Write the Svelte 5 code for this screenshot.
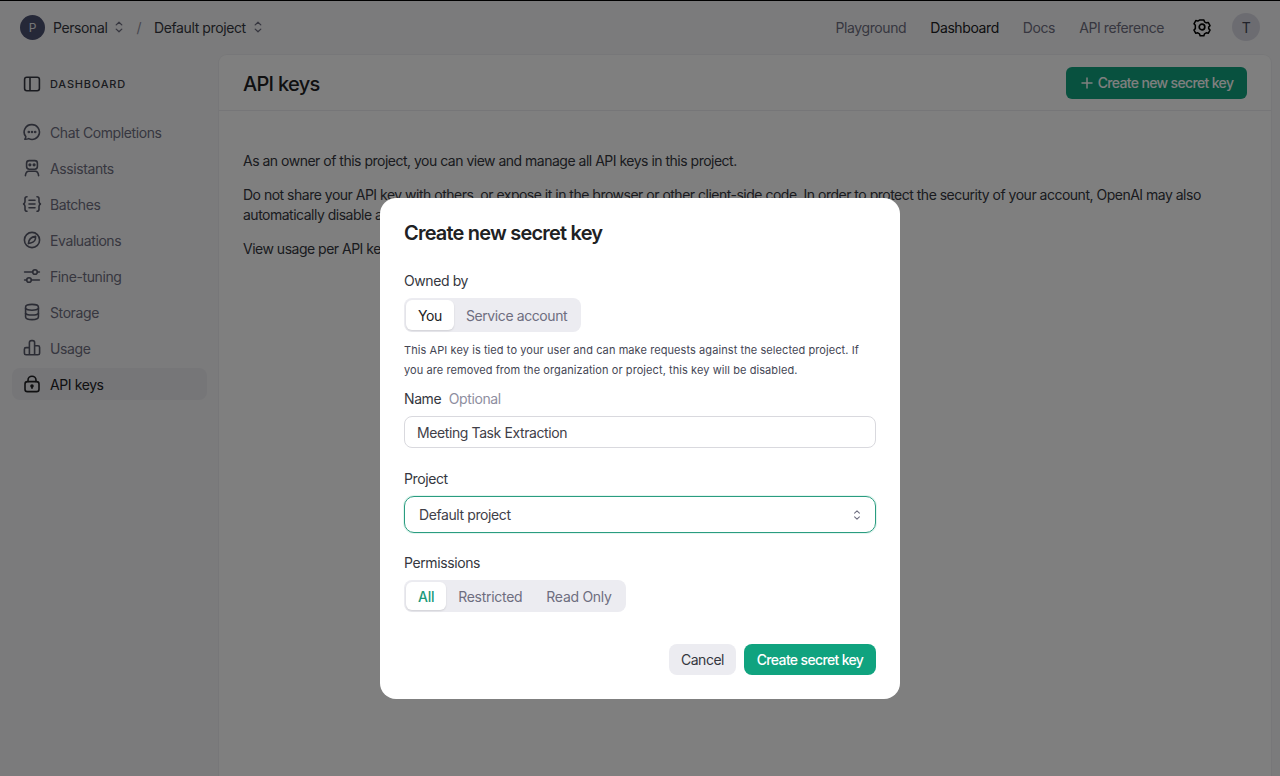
<script>
  const navItems = [
    { label: 'Chat Completions', icon: 'chat' },
    { label: 'Assistants', icon: 'bot' },
    { label: 'Batches', icon: 'batch' },
    { label: 'Evaluations', icon: 'compass' },
    { label: 'Fine-tuning', icon: 'tune' },
    { label: 'Storage', icon: 'db' },
    { label: 'Usage', icon: 'bars' },
    { label: 'API keys', icon: 'lock', active: true }
  ]
</script>

{#snippet updown(size)}
  <svg class="updown" width={size} height={size} viewBox="0 0 12 12" fill="none" stroke="currentColor" stroke-width="1.1" stroke-linecap="round" stroke-linejoin="round">
    <path d="M3.6 4.2 6 1.9l2.4 2.3M3.6 7.8 6 10.1l2.4-2.3" />
  </svg>
{/snippet}

{#snippet navIcon(name)}
  <svg width="20" height="20" viewBox="0 0 20 20" fill="none" stroke="currentColor" stroke-width="1.6" stroke-linecap="round" stroke-linejoin="round">
    {#if name === 'chat'}
      <path d="M10 2.6a7.4 7.4 0 1 1-3.3 14c-1 .5-2.4.8-3.9.7.6-.7 1-1.6 1-2.7A7.4 7.4 0 0 1 10 2.6Z" />
      <circle cx="6.8" cy="10" r=".5" fill="currentColor" />
      <circle cx="10" cy="10" r=".5" fill="currentColor" />
      <circle cx="13.2" cy="10" r=".5" fill="currentColor" />
    {:else if name === 'bot'}
      <rect x="4.6" y="2.6" width="10.8" height="8.6" rx="2.6" />
      <path d="M3.4 17.6c.3-3 2-4.4 3.4-4.4h6.4c1.4 0 3.1 1.4 3.4 4.4" />
      <circle cx="7.9" cy="6.8" r=".8" fill="currentColor" />
      <circle cx="12.1" cy="6.8" r=".8" fill="currentColor" />
    {:else if name === 'batch'}
      <path d="M5 2.8c-1.6 0-2 .8-2 2v2.6c0 1.2-.5 2-1.4 2.6.9.6 1.4 1.4 1.4 2.6v2.6c0 1.2.4 2 2 2M15 2.8c1.6 0 2 .8 2 2v2.6c0 1.2.5 2 1.4 2.6-.9.6-1.4 1.4-1.4 2.6v2.6c0 1.2-.4 2-2 2M7 6.2h6M7 10h6M7 13.8h6" />
    {:else if name === 'compass'}
      <circle cx="10" cy="10" r="7.6" />
      <path d="M13.6 6.4c.2 3.2-1.4 6-5 6.6l-2.2.6c.2-3.6 2-6.6 7.2-7.2Z" />
    {:else if name === 'tune'}
      <path d="M2.6 6h8M15.4 6h2M2.6 14h2M9.4 14h8" />
      <circle cx="13" cy="6" r="2.3" />
      <circle cx="7" cy="14" r="2.3" />
    {:else if name === 'db'}
      <path d="M3.6 5c0-1.8 2.4-2.6 6.4-2.6s6.4.8 6.4 2.6v10c0 1.8-2.4 2.6-6.4 2.6s-6.4-.8-6.4-2.6V5Z" />
      <path d="M3.6 6.6c1 1.2 3.4 1.6 6.4 1.6s5.4-.4 6.4-1.6M3.6 11.4c1 1.2 3.4 1.6 6.4 1.6s5.4-.4 6.4-1.6" />
    {:else if name === 'bars'}
      <path d="M7.4 16.8V4.6c0-1.2.8-2 1.9-2h1.4c1.1 0 1.9.8 1.9 2v12.2M7.4 16.8H4c-1 0-1.6-.6-1.6-1.6v-4c0-1 .6-1.6 1.6-1.6h3.4M12.6 16.8H16c1 0 1.6-.6 1.6-1.6V9.4c0-1-.6-1.6-1.6-1.6h-3.4M7.4 16.8h5.2" />
    {:else if name === 'lock'}
      <rect x="3" y="7.6" width="14" height="10" rx="2.4" />
      <path d="M6 7.6V6.2a4 4 0 0 1 8 0v1.4" />
      <circle cx="10" cy="12" r="1" fill="currentColor" />
      <path d="M10 12.4v1.8" />
    {/if}
  </svg>
{/snippet}

<div class="page">
  <header class="topbar">
    <div class="crumbs">
      <span class="org-badge">P</span>
      <span class="crumb">Personal</span>
      {@render updown(14)}
      <span class="slash">/</span>
      <span class="crumb">Default project</span>
      {@render updown(14)}
    </div>
    <nav class="toplinks">
      <span>Playground</span>
      <span class="current">Dashboard</span>
      <span>Docs</span>
      <span>API reference</span>
    </nav>
    <svg class="gear" width="20" height="20" viewBox="0 0 20 20" fill="none" stroke="currentColor" stroke-width="1.7" stroke-linejoin="round">
      <path d="M7.9 2.2h4.2l.7 2.1 1.9 1.1 2.2-.5 2 3.6-1.5 1.6v1.7l1.5 1.6-2 3.6-2.2-.5-1.9 1.1-.7 2.1H7.9l-.7-2.1-1.9-1.1-2.2.5-2-3.6 1.5-1.6V8.1L1.1 6.5l2-3.6 2.2.5 1.9-1.1Z" transform="translate(1 1) scale(.9)" />
      <circle cx="10" cy="10" r="2.8" />
    </svg>
    <span class="avatar">T</span>
  </header>

  <div class="body">
    <aside class="sidebar">
      <div class="side-title">
        <svg width="20" height="20" viewBox="0 0 20 20" fill="none" stroke="currentColor" stroke-width="1.6" stroke-linejoin="round">
          <rect x="2.6" y="3.2" width="14.8" height="13.6" rx="2.2" />
          <path d="M8 3.2v13.6" />
        </svg>
        <span>DASHBOARD</span>
      </div>
      <ul class="nav">
        {#each navItems as item}
          <li class="nav-item" class:active={item.active}>
            {@render navIcon(item.icon)}
            <span>{item.label}</span>
          </li>
        {/each}
      </ul>
    </aside>

    <main class="panel">
      <div class="panel-head">
        <h1>API keys</h1>
        <button class="new-key">
          <svg width="14" height="14" viewBox="0 0 14 14" fill="none" stroke="currentColor" stroke-width="1.5" stroke-linecap="round"><path d="M7 2v10M2 7h10" /></svg>
          Create new secret key
        </button>
      </div>
      <div class="panel-body">
        <p>As an owner of this project, you can view and manage all API keys in this project.</p>
        <p>Do not share your API key with others, or expose it in the browser or other client-side code. In order to protect the security of your account, OpenAI may also automatically disable any API key that has leaked publicly.</p>
        <p>View usage per API key on the Usage page.</p>
      </div>
    </main>
  </div>
</div>

<div class="overlay">
  <div class="modal">
    <h2>Create new secret key</h2>

    <div class="label owned">Owned by</div>
    <div class="segment">
      <span class="seg on">You</span>
      <span class="seg">Service account</span>
    </div>
    <p class="help">This API key is tied to your user and can make requests against the selected project. If you are removed from the organization or project, this key will be disabled.</p>

    <div class="label name">Name <span class="optional">Optional</span></div>
    <div class="input">Meeting Task Extraction</div>

    <div class="label project">Project</div>
    <div class="select">
      <span>Default project</span>
      {@render updown(12)}
    </div>

    <div class="label perms">Permissions</div>
    <div class="segment small">
      <span class="seg on green">All</span>
      <span class="seg">Restricted</span>
      <span class="seg">Read Only</span>
    </div>

    <div class="actions">
      <button class="cancel">Cancel</button>
      <button class="create">Create secret key</button>
    </div>
  </div>
</div>

<style>
  :global(body) {
    margin: 0;
    font-family: Inter, "Liberation Sans", sans-serif;
    color: #202123;
    background: #f7f7f8;
    overflow: hidden;
  }

  .page {
    height: 776px;
    display: flex;
    flex-direction: column;
    background: #f7f7f8;
    border-top: 1px solid #000;
    box-sizing: border-box;
    font-size: 14px;
    letter-spacing: -0.4px;
  }

  .topbar {
    height: 54px;
    flex: none;
    box-sizing: border-box;
    display: flex;
    align-items: center;
    padding: 0 20px 2px;
  }

  .crumbs {
    display: flex;
    align-items: center;
    color: #353740;
  }

  .org-badge {
    width: 25px;
    height: 25px;
    border-radius: 50%;
    background: #4b5070;
    color: #e8e8ee;
    font-size: 12px;
    letter-spacing: 0;
    display: flex;
    align-items: center;
    justify-content: center;
    margin-right: 8px;
  }

  .updown {
    display: block;
    flex: none;
  }

  .crumbs .updown {
    margin-left: 5px;
    color: #6e6e80;
  }

  .slash {
    color: #8e8ea0;
    margin: 0 13px 0 10px;
  }

  .toplinks {
    margin-left: auto;
    display: flex;
    gap: 24px;
    color: #6e6e80;
  }

  .toplinks .current {
    color: #202123;
  }

  .gear {
    margin-left: 28px;
    color: #000;
  }

  .avatar {
    width: 28px;
    height: 28px;
    margin-left: 20px;
    border-radius: 50%;
    background: #d9d9e3;
    color: #444654;
    display: flex;
    align-items: center;
    justify-content: center;
    font-size: 14px;
  }

  .body {
    flex: 1;
    display: flex;
    min-height: 0;
  }

  .sidebar {
    width: 219px;
    flex: none;
    box-sizing: border-box;
    padding: 0 12px;
  }

  .side-title {
    display: flex;
    align-items: center;
    gap: 8px;
    height: 20px;
    margin-top: 19px;
    padding-left: 10px;
    font-size: 11px;
    font-weight: 500;
    letter-spacing: 0.8px;
    color: #353740;
  }

  .nav {
    list-style: none;
    margin: 22px 0 0;
    padding: 0;
    width: 195px;
    color: #6e6e80;
  }

  .nav-item {
    height: 32px;
    margin-bottom: 4px;
    padding-left: 10px;
    border-radius: 8px;
    display: flex;
    align-items: center;
    gap: 8px;
    color: #6e6e80;
  }

  .nav-item svg {
    color: #565869;
    flex: none;
  }

  .nav-item.active {
    background: #ececf1;
    color: #202123;
  }

  .nav-item.active svg {
    color: #202123;
  }

  .panel {
    flex: 1;
    margin-right: 9px;
    background: #fff;
    border-radius: 8px 8px 0 0;
    box-shadow: 0 0 0 1px #efeff2;
    min-width: 0;
  }

  .panel-head {
    height: 56px;
    box-sizing: border-box;
    border-bottom: 1px solid #ececf1;
    display: flex;
    align-items: center;
    justify-content: space-between;
    padding: 0 24px;
  }

  h1 {
    margin: 2px 0 0;
    font-size: 20px;
    font-weight: 500;
    letter-spacing: -0.7px;
    color: #202123;
  }

  .new-key {
    height: 32px;
    width: 181px;
    border: 0;
    border-radius: 6px;
    background: #10a37f;
    color: #fff;
    font: inherit;
    font-weight: 500;
    letter-spacing: -0.65px;
    display: flex;
    align-items: center;
    justify-content: center;
    gap: 4px;
    padding: 0;
  }

  .panel-body {
    padding: 40px 24px 0;
    color: #353740;
    letter-spacing: -0.5px;
  }

  .panel-body p {
    margin: 0 0 14px;
    line-height: 20px;
  }

  .overlay {
    position: fixed;
    inset: 0;
    background: rgba(0, 0, 0, 0.5);
    display: flex;
    justify-content: center;
    align-items: flex-start;
    padding-top: 198px;
    box-sizing: border-box;
  }

  .modal {
    width: 520px;
    height: 501px;
    box-sizing: border-box;
    background: #fff;
    border-radius: 16px;
    padding: 24px;
    font-size: 14px;
    letter-spacing: -0.4px;
    color: #3f4048;
  }

  h2 {
    margin: 0;
    font-size: 20px;
    line-height: 22px;
    font-weight: 600;
    letter-spacing: -0.8px;
    color: #202123;
  }

  .label {
    line-height: 20px;
    color: #353740;
  }

  .owned {
    margin-top: 27px;
    margin-bottom: 7px;
  }

  .segment {
    display: inline-flex;
    height: 34px;
    box-sizing: border-box;
    padding: 2px;
    background: #ececf1;
    border-radius: 8px;
    color: #6e6e80;
    vertical-align: top;
  }

  .segment.small {
    height: 32px;
    letter-spacing: -0.28px;
  }

  .seg {
    display: flex;
    align-items: center;
    padding: 0 12px;
    border-radius: 6px;
  }

  .seg.on {
    background: #fff;
    color: #202123;
    box-shadow: 0 1px 2px rgba(0, 0, 0, 0.12);
  }

  .seg.green {
    color: #1a9a7b;
    font-weight: 500;
  }

  .help {
    width: 460px;
    margin: 8px 0 0;
    font-size: 11px;
    line-height: 20px;
    letter-spacing: 0.08px;
    color: #444654;
  }

  .name {
    margin-top: 9px;
    margin-bottom: 7px;
  }

  .optional {
    color: #8e8ea0;
    margin-left: 4px;
  }

  .input {
    height: 32px;
    box-sizing: border-box;
    border: 1px solid #d9d9de;
    border-radius: 8px;
    padding: 0 12px;
    display: flex;
    align-items: center;
  }

  .project {
    margin-top: 21px;
    margin-bottom: 7px;
  }

  .select {
    height: 37px;
    box-sizing: border-box;
    border: 1px solid #2a9c80;
    box-shadow: 0 0 0 1px #e3f6f0;
    border-radius: 10px;
    padding: 0 17px 0 14px;
    display: flex;
    align-items: center;
    justify-content: space-between;
  }

  .select .updown {
    color: #6e6e80;
    margin-right: -5px;
  }

  .perms {
    margin-top: 20px;
    margin-bottom: 7px;
  }

  .actions {
    display: flex;
    justify-content: flex-end;
    gap: 8px;
    margin-top: 32px;
  }

  .actions button {
    height: 31px;
    border: 0;
    border-radius: 8px;
    font: inherit;
    letter-spacing: -0.5px;
    padding: 0;
  }

  .cancel {
    width: 67px;
    background: #ececf1;
    color: #353740;
  }

  .actions .create {
    width: 132px;
    background: #10a37f;
    color: #fff;
    font-weight: 500;
    letter-spacing: -0.65px;
  }
</style>
